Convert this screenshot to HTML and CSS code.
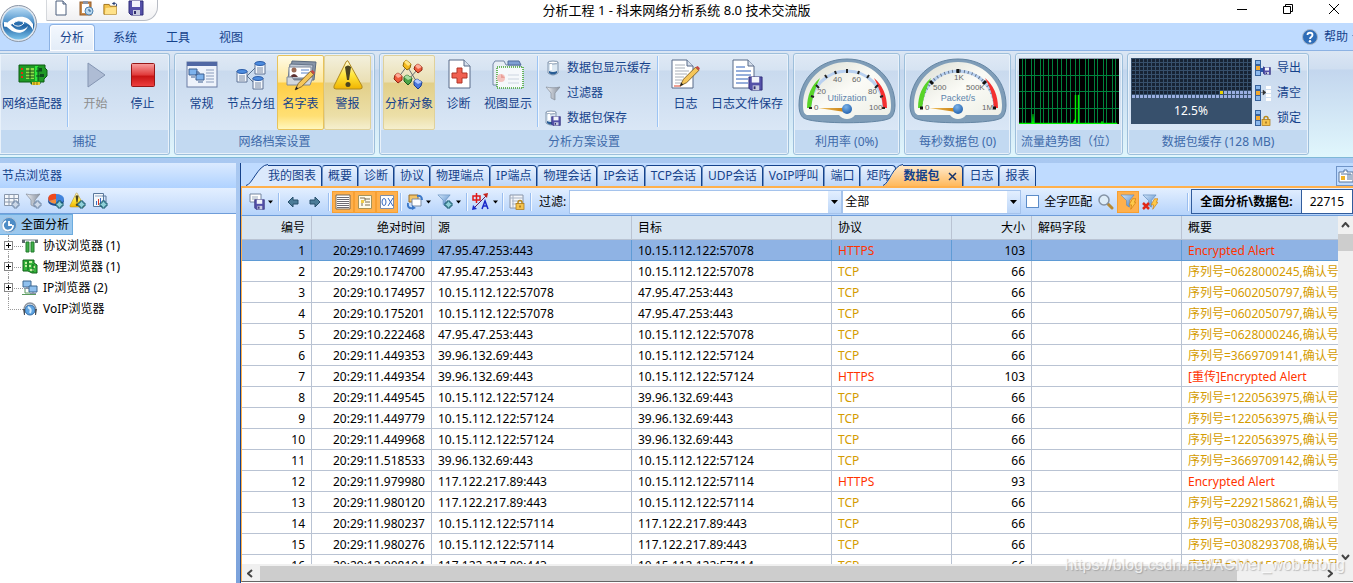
FILE: index.html
```html
<!DOCTYPE html>
<html lang="zh-CN">
<head>
<meta charset="UTF-8">
<meta name="viewport" content="width=device-width, initial-scale=1.0">
<title>分析工程 1 - 科来网络分析系统 8.0 技术交流版</title>
<link rel="stylesheet" href="styles.css">
</head>
<body>
<!-- shared icons -->
<svg class="defs" width="0" height="0" aria-hidden="true">
    <defs>
        <linearGradient id="orb" x1="0" y1="0" x2="0" y2="1"><stop offset="0" stop-color="#b9dcf5"/><stop offset=".45" stop-color="#4f93cb"/><stop offset=".55" stop-color="#1f62a4"/><stop offset="1" stop-color="#7cc3ea"/></linearGradient>
        <linearGradient id="red" x1="0" y1="0" x2="0" y2="1"><stop offset="0" stop-color="#f8a0a0"/><stop offset=".5" stop-color="#e03a3a"/><stop offset=".55" stop-color="#c81414"/><stop offset="1" stop-color="#ee4040"/></linearGradient>
        <linearGradient id="gold" x1="0" y1="0" x2="0" y2="1"><stop offset="0" stop-color="#fffbe0"/><stop offset=".5" stop-color="#ffe63c"/><stop offset="1" stop-color="#f0b400"/></linearGradient>
        <linearGradient id="gray" x1="0" y1="0" x2="1" y2="0"><stop offset="0" stop-color="#f4f6f8"/><stop offset=".5" stop-color="#b8bec8"/><stop offset="1" stop-color="#8a929e"/></linearGradient>
        <linearGradient id="blueFill" x1="0" y1="0" x2="1" y2="1"><stop offset="0" stop-color="#d2e6fa"/><stop offset="1" stop-color="#4a82c4"/></linearGradient>
        <linearGradient id="face" x1="0" y1="0" x2="1" y2="1"><stop offset="0" stop-color="#d9dcd2"/><stop offset=".5" stop-color="#fbfbf6"/><stop offset="1" stop-color="#eceee6"/></linearGradient>
        <radialGradient id="hub" cx=".4" cy=".3" r=".8"><stop offset="0" stop-color="#7db4ea"/><stop offset="1" stop-color="#1a5aa8"/></radialGradient>
        <linearGradient id="needle" x1="0" y1="0" x2="1" y2="0"><stop offset="0" stop-color="#f0c060"/><stop offset="1" stop-color="#c87f10"/></linearGradient>
        <pattern id="cellDark" width="4" height="4" patternUnits="userSpaceOnUse"><rect width="4" height="4" fill="#37506c"/><rect x="1" y="1" width="3" height="3" fill="#172334"/></pattern>
        <pattern id="cellLight" width="4" height="4" patternUnits="userSpaceOnUse"><rect width="4" height="4" fill="#37506c"/><rect x="1" y="1" width="3" height="3" fill="#9aaee0"/></pattern>
        <symbol id="floppy" viewBox="0 0 16 16"><path d="M1 1h14v14H3l-2-2z" fill="#5450a8" stroke="#2f2c78"/><path d="M4 1h8v6H4z" fill="#f2f4fb"/><path d="M5 10h7v5H5z" fill="#c9cce0"/><path d="M6 11h2v3H6z" fill="#333070"/></symbol>
        <symbol id="plus" viewBox="0 0 9 9"><path d="M3 1h3v2h2v3H6v2H3V6H1V3h2z" fill="#8fd0d8" stroke="#14566a"/></symbol>
        <symbol id="plusGray" viewBox="0 0 9 9"><path d="M3 1h3v2h2v3H6v2H3V6H1V3h2z" fill="#ccd8e8" stroke="#7088a8"/></symbol>
        <symbol id="funnel" viewBox="0 0 16 16"><path d="M1 1h14l-5 6v7l-3-2V7z" fill="url(#blueFill)" stroke="#5f8ab8" stroke-width=".7"/></symbol>
        <symbol id="funnelGray" viewBox="0 0 16 16"><path d="M1 2c4 1 10 1 14 0l-5 6v7l-4-2V8z" fill="url(#gray)" stroke="#858d98" stroke-width=".7"/></symbol>
        <symbol id="warn" viewBox="0 0 32 32"><path d="M16 2 30 27q1 3-2 3H4q-3 0-2-3L14 3q1-2 2-1z" fill="url(#gold)" stroke="#b08a20"/><path d="M13 8q3-3 6 0l-2 13h-2z" fill="#4a4420"/><circle cx="16" cy="25.500" r="2.500" fill="#4a4420"/></symbol>
        <symbol id="bolt" viewBox="0 0 8 12"><path d="M4 0h4L6 4h2L2 12l1-5H0z" fill="#ffc94a" stroke="#c47808" stroke-width=".7"/></symbol>
        <symbol id="drive" viewBox="0 0 6 16"><rect width="6" height="16" fill="#37629c"/><path d="M1 1h4v3H1zM1 11h4v4H1z" fill="#8bb8ec"/><path d="M1 6h4v4H1z" fill="#f3a92e"/></symbol>
        <symbol id="lock" viewBox="0 0 10 10"><path d="M3 5V3a2 2 0 0 1 4 0v2" fill="none" stroke="#b88a20" stroke-width="1.500"/><rect x="1" y="4" width="8" height="6" fill="#f4c34e" stroke="#a87410" stroke-width=".7"/><path d="M5 6v2" stroke="#704000"/></symbol>
        <symbol id="jar" viewBox="0 0 16 16"><path d="M3 2v11q5 4 10 0V2z" fill="#dce8f2" stroke="#8296ae"/><ellipse cx="8" cy="2.500" rx="5" ry="1.500" fill="#fff" stroke="#8296ae"/><path d="M4 11q4 2 8 0v2q-4 3-8 0z" fill="#285c94"/><path d="M6 4v6" stroke="#fff" stroke-width="2"/></symbol>
        <symbol id="caret" viewBox="0 0 7 4"><path d="M0 0h7L3.500 4z" fill="#000"/></symbol>
        <symbol id="server" viewBox="0 0 12 14"><path d="M1 2h10v11H1z" fill="#f3f7fc" stroke="#5e7394"/><ellipse cx="6" cy="2.500" rx="5" ry="2" fill="#4d8de0" stroke="#2b5ca8"/><path d="M3 7h6M3 9h6M3 11h6" stroke="#7b8aa4"/></symbol>
        <symbol id="pencil" viewBox="0 0 20 20"><path d="m1 19 3-6L15 2l3 3L7 16z" fill="#f5c65a" stroke="#7a5a20" stroke-width=".8"/><path d="m15 2 2-1 2 2-1 2z" fill="#c64a44"/><path d="m1 19 1-3 2 2z" fill="#222"/></symbol>
        <symbol id="pc" viewBox="0 0 10 10"><path d="M1 1h8v6H1z" fill="#8fc0ee" stroke="#3d6690"/><path d="M4 7h2v1h2v1H2V8h2z" fill="#8794a8"/></symbol>
    </defs>
</svg>

<div class="window">
    <header class="titlebar">
        <div class="quick">
            <button type="button" aria-label="新建"><svg width="16" height="16" viewBox="0 0 16 16"><path d="M3 1h7l3 3v11H3z" fill="#fff" stroke="#4c5f7c"/><path d="M10 1v3h3" fill="#c8d4e4" stroke="#4c5f7c"/></svg></button>
            <button type="button" aria-label="粘贴"><svg width="16" height="16" viewBox="0 0 16 16"><rect x="2" y="2" width="11" height="13" fill="#c98a4a" stroke="#935a24"/><path d="M4 4h7v9H4z" fill="#fff"/><path d="M5 1h5v3H5z" fill="#8c95a5"/><circle cx="11" cy="11" r="4" fill="#b9d8f0" stroke="#4e82b0"/><path d="M11 9v2h2" fill="none" stroke="#255a8c"/></svg></button>
            <button type="button" aria-label="打开"><svg width="16" height="16" viewBox="0 0 18 16"><path d="M1 4h6l1 2h7v9H1z" fill="#f3c34c" stroke="#9c6c12"/><path d="m3 8 12-1v8H2z" fill="#ffe28a"/><path d="M15 6c1-2 0-4-3-3" stroke="#243c70" fill="none"/><path d="m13 1-3 2 3 2z" fill="#243c70"/></svg></button>
            <button type="button" aria-label="保存"><svg width="16" height="16"><use href="#floppy"/></svg></button>
        </div>
        <h1>分析工程 1 - 科来网络分析系统 8.0 技术交流版</h1>
        <div class="winbtns">
            <button type="button" aria-label="最小化"><svg width="12" height="12"><path d="M1 6.500h10" stroke="#000"/></svg></button>
            <button type="button" aria-label="还原"><svg width="12" height="12"><path d="M1.500 3.500h7v7h-7zM3.500 3V1.500h7v7H9" fill="none" stroke="#000"/></svg></button>
            <button type="button" aria-label="关闭"><svg width="12" height="12"><path d="m1 1 10 10M11 1 1 11" stroke="#000"/></svg></button>
        </div>
    </header>
    <button type="button" class="orb" aria-label="主菜单"><svg width="38" height="38" viewBox="0 0 38 38"><circle cx="18.500" cy="18.500" r="18" fill="#dfe7f0" stroke="#8b96a6"/><circle cx="18.500" cy="18.500" r="16" fill="url(#orb)"/><path d="M4 22c2-4 6-7 10-9 8-3 15-1 19 6l0 6c-3-6-8-9-13-8-6 0-10 4-16 5z" fill="#fff"/><path d="M4 17c4 0 6 2 9 5 4 4 11 4 15-1-2 6-8 8-13 6-5-1-7-6-11-6z" fill="#fff"/><path d="M13 19c3-4 8-4 11-1-3 4-8 4-11 1z" fill="#2b6fae" stroke="#fff"/></svg></button>

    <nav class="menubar">
        <button type="button" class="menu active">分析</button>
        <button type="button" class="menu">系统</button>
        <button type="button" class="menu">工具</button>
        <button type="button" class="menu">视图</button>
        <button type="button" class="help"><svg width="16" height="16" viewBox="0 0 16 16"><circle cx="8" cy="8" r="7.500" fill="#2f6db8" stroke="#a8b6c8"/><path d="M5.500 6C5.500 3 10.500 3 10.500 6 10.500 8 8 8 8 10" fill="none" stroke="#fff" stroke-width="1.800"/><circle cx="8" cy="12.300" r="1.200" fill="#fff"/></svg>帮助<svg width="7" height="4"><path d="M0 0h7L3.500 4z" fill="#4a6fa8"/></svg></button>
    </nav>

    <div class="ribbon">
        <section class="group group-first">
            <div class="tools">
                <button type="button" class="big"><svg width="32" height="32" viewBox="0 0 32 32"><path d="M3 6h26v3l2 2v6l-3 3v3h-4v2h-9v-2H3z" fill="#1f9a24" stroke="#0c5a12"/><path d="M10 9h8v11h-8z" fill="#8de04a"/><path d="M10 12h8M10 15h8M10 18h8M14 9v11" stroke="#124a14"/><path d="M5 9h2v2H5zM5 13h2v2H5zM5 17h2v2H5z" fill="#e82c14"/><path d="M19 7h3v15h-3z" fill="#2ee83a"/><path d="M23 9h3v3h-3zM24 15h4v3h-4z" fill="#0d4d1c"/><path d="M20 12h6M20 17h5M22 8v14" stroke="#0d4d1c"/><path d="M16 23h8v3h-8z" fill="#e8c830"/><path d="M18 23v3M21 23v3" stroke="#8c6c00"/></svg><span>网络适配器</span></button>
                <i class="sep"></i>
                <button type="button" class="big" disabled><svg width="32" height="32" viewBox="0 0 32 32"><path d="M8 4v24l17-12z" fill="#aebcd4" stroke="#8495b2"/></svg><span>开始</span></button>
                <button type="button" class="big"><svg width="32" height="32" viewBox="0 0 32 32"><rect x="4.500" y="4.500" width="23" height="23" rx="1" fill="url(#red)" stroke="#961616"/></svg><span>停止</span></button>
            </div>
            <h2>捕捉</h2>
        </section>

        <section class="group">
            <div class="tools">
                <button type="button" class="big"><svg width="32" height="32" viewBox="0 0 32 32"><rect x="1" y="3" width="30" height="25" fill="#eef3fb" stroke="#6a7da4"/><path d="M1 3h30v4H1z" fill="#5068a4"/><path d="M3 10h8v6H3zM10 15h8v6h-8z" fill="#7db2ec" stroke="#3d5f90"/><path d="M5 18h4M12 23h5M10 13h3v2" fill="none" stroke="#3d5f90"/><path d="M20 11h8M20 14h8M20 17h8M20 20h8M20 23h8" stroke="#8a9cbc"/></svg><span>常规</span></button>
                <button type="button" class="big"><svg width="32" height="32" viewBox="0 0 32 32"><path d="M12 17 20 9M12 17l8 8" stroke="#56708e"/><use href="#server" x="1" y="10" width="12" height="14"/><use href="#server" x="19" y="2" width="12" height="14"/><use href="#server" x="17" y="17" width="12" height="14"/></svg><span>节点分组</span></button>
                <button type="button" class="big pressed"><svg width="32" height="32" viewBox="0 0 32 32"><path d="m7 2 24 1-2 18H4z" fill="#8795a8" stroke="#59697e"/><path d="m5 5 23 1-1 14H3z" fill="#c3ccd8" stroke="#657489"/><path d="M4 8h22v11H4z" fill="#fff" stroke="#7a8698"/><circle cx="9" cy="11" r="2.500" fill="#9b6a54"/><path d="M5 18q4-6 8 0z" fill="#5c3030"/><path d="M16 11h8M16 14h8" stroke="#5b84c8"/><path d="M2 18h5l2 3h12l2-3h5l-3 8H2z" fill="#d3d8de" stroke="#828b98"/><use href="#pencil" x="9" y="10" width="22" height="22"/></svg><span>名字表</span></button>
                <button type="button" class="big hot"><svg width="32" height="32"><use href="#warn"/></svg><span>警报</span></button>
            </div>
            <h2>网络档案设置</h2>
        </section>

        <section class="group">
            <div class="tools">
                <button type="button" class="big hot"><svg width="32" height="32" viewBox="0 0 32 32"><path d="M14 7 5 19M14 7l11 18M25 10 16 20" stroke="#666b70"/><path d="m13 1 5 4-1 4-3 2-4-4 1-4z" fill="#f3b81c" stroke="#8c6400"/><path d="m13 1 5 4-3 2-4-4z" fill="#ffe480"/><path d="m25 5 4 3v3l-4 3-4-4 1-3z" fill="#ee5a3c" stroke="#8e2410"/><path d="m25 5 4 3-4 2-3-3z" fill="#ffad98"/><path d="m5 14 4 3v4l-4 3-4-4 1-4z" fill="#ee5a3c" stroke="#8e2410"/><path d="m5 14 4 3-4 2-3-3z" fill="#ffad98"/><path d="m14 16 5 3-1 4-3 3-4-4v-4z" fill="#4da346" stroke="#1c5c1c"/><path d="m14 16 5 3-4 2-4-3z" fill="#a8dda0"/><path d="m24 20 5 3-1 4-3 3-4-4v-4z" fill="#4a78dc" stroke="#1a3c8c"/><path d="m24 20 5 3-4 2-4-3z" fill="#afc8ff"/></svg><span>分析对象</span></button>
                <button type="button" class="big"><svg width="32" height="32" viewBox="0 0 32 32"><path d="M6 1h15l6 6v22H6z" fill="#fff" stroke="#596b88"/><path d="M21 1v6h6" fill="#d5deea" stroke="#596b88"/><path d="M14 9h5v5h5v5h-5v5h-5v-5H9v-5h5z" fill="#f06050" stroke="#b03426"/></svg><span>诊断</span></button>
                <button type="button" class="big"><svg width="32" height="32" viewBox="0 0 32 32"><path d="M1 5l2-3h9l2 4h14v20H1z" fill="#e8eef5" stroke="#7487a6"/><path d="M16 2h11l2 4H16z" fill="#80a0d4" stroke="#516c9c"/><path d="M5 8h26v21H5z" fill="#f5f8fb" stroke="#42a42c" stroke-dasharray="1 1" stroke-width="1.500"/><circle cx="9" cy="19" r="4" fill="#f4c3bf"/><path d="M9 15v4h4" fill="#e99f98"/><path d="M16 16h11M16 20h11M16 24h11" stroke="#ccd5e0"/></svg><span>视图显示</span></button>
                <i class="sep"></i>
                <div class="smalls">
                    <button type="button"><svg width="16" height="16"><use href="#jar"/></svg>数据包显示缓存</button>
                    <button type="button"><svg width="16" height="16"><use href="#funnelGray"/></svg>过滤器</button>
                    <button type="button"><svg width="16" height="16"><use href="#jar" x="-2" width="16" height="16"/><use href="#floppy" x="6" y="6" width="10" height="10"/></svg>数据包保存</button>
                </div>
                <i class="sep"></i>
                <button type="button" class="big"><svg width="32" height="32" viewBox="0 0 32 32"><path d="M2 1h15l6 6v22H2z" fill="#fff" stroke="#596b88"/><path d="M17 1v6h6" fill="#d5deea" stroke="#596b88"/><path d="M5 6h10M5 9h10M5 12h14M5 15h12M5 18h9M5 21h7M5 24h6" stroke="#a8afb8"/><path d="M4 27h7" stroke="#e04028"/><use href="#pencil" x="9" y="6" width="22" height="22"/></svg><span>日志</span></button>
                <button type="button" class="big"><svg width="32" height="32" viewBox="0 0 32 32"><path d="M2 1h15l6 6v22H2z" fill="#fff" stroke="#596b88"/><path d="M17 1v6h6" fill="#d5deea" stroke="#596b88"/><path d="M5 8h9M5 12h15M5 16h15M5 20h12M5 24h12" stroke="#2c5eb8"/><use href="#floppy" x="17" y="17" width="15" height="15"/></svg><span>日志文件保存</span></button>
            </div>
            <h2>分析方案设置</h2>
        </section>

        <section class="group">
            <div class="tools meter">
                <svg width="98" height="66" viewBox="0 0 98 66">
                    <path d="M1 47C1 20 22 1 49 1s48 19 48 46c0 7-2 13-7 14-13 5-69 5-82 0-5-1-7-7-7-14z" fill="#7f9db8" stroke="#6485a3"/>
                    <path d="M5 47C5 22 25 4 49 4s44 18 44 43c0 6-1 9-4 10H57a10 10 0 0 1-16 0H9c-3-1-4-4-4-10z" fill="url(#face)"/>
                    <path d="M12 50a37 37 0 0 1 74 0" fill="none" stroke="#b8d0f0" stroke-width="3"/>
                    <path d="M9 50Q9 31 22 20 15 34 13 50z" fill="#58d428"/>
                    <path d="M89 50q0-19-13-30 8 14 9 30z" fill="#f43030"/>
                    <path d="M11 50h3M13 38l3 1M18 27l3 3M27 17l2 3M37 13l1 3M49 11v4M61 13l-1 3M71 17l-2 3M80 27l-3 3M85 38l-3 1M87 50h-3" stroke="#222" stroke-width="2"/>
                    <g class="scale"><text x="16" y="52">0</text><text x="19" y="36">20</text><text x="35" y="24">40</text><text x="54" y="24">60</text><text x="70" y="36">80</text><text x="71" y="52">100</text></g>
                    <text class="caption" x="49" y="43">Utilization</text>
                    <path d="M20 50h27v4z" fill="url(#needle)"/><circle cx="49" cy="51" r="5" fill="url(#hub)"/>
                </svg>
            </div>
            <h2>利用率 (0%)</h2>
        </section>

        <section class="group">
            <div class="tools meter">
                <svg width="98" height="66" viewBox="0 0 98 66">
                    <path d="M1 47C1 20 22 1 49 1s48 19 48 46c0 7-2 13-7 14-13 5-69 5-82 0-5-1-7-7-7-14z" fill="#7f9db8" stroke="#6485a3"/>
                    <path d="M5 47C5 22 25 4 49 4s44 18 44 43c0 6-1 9-4 10H57a10 10 0 0 1-16 0H9c-3-1-4-4-4-10z" fill="url(#face)"/>
                    <path d="M12 50a37 37 0 0 1 74 0" fill="none" stroke="#b8d0f0" stroke-width="3"/>
                    <path d="M12 50a37 37 0 0 1 74 0" fill="none" stroke="#68788c" stroke-width="3" stroke-dasharray="1 3"/>
                    <path d="M9 50Q9 31 22 20 15 34 13 50z" fill="#58d428"/>
                    <path d="M89 50q0-19-13-30 8 14 9 30z" fill="#f43030"/>
                    <path d="M11 50h3M21 23l3 3M49 11v4M77 23l-3 3M87 50h-3" stroke="#111" stroke-width="3"/>
                    <g class="scale"><text x="16" y="52">0</text><text x="24" y="32">500</text><text x="45" y="22">1K</text><text x="57" y="32">500K</text><text x="73" y="52">1M</text></g>
                    <text class="caption" x="49" y="43">Packet/s</text>
                    <path d="M20 50h27v4z" fill="url(#needle)"/><circle cx="49" cy="51" r="5" fill="url(#hub)"/>
                </svg>
            </div>
            <h2>每秒数据包 (0)</h2>
        </section>

        <section class="group">
            <div class="tools meter">
                <svg width="100" height="66" viewBox="0 0 100 66">
                    <rect width="100" height="66" fill="#000"/>
                    <path d="M3.500 0v66M6.500 0v66M12.500 0v66M15.500 0v66M21.500 0v66M24.500 0v66M29.500 0v66M33.500 0v66M38.500 0v66M42.500 0v66M47.500 0v66M51.500 0v66M56.500 0v66M60.500 0v66M66.500 0v66M69.500 0v66M75.500 0v66M78.500 0v66M84.500 0v66M87.500 0v66M93.500 0v66M96.500 0v66M0 17.500h100M0 33.500h100M0 50.500h100" stroke="#00823c"/>
                    <path d="M0 66V65h13l1-9 1 9h39l2-4V37h1v28h2V37h1v28h22l1-2 1 2h14v1z" fill="#0f0" stroke="#0d0" stroke-width=".5"/>
                    <path d="M0 .5h100" stroke="#8a9cae"/>
                </svg>
            </div>
            <h2>流量趋势图（位）</h2>
        </section>

        <section class="group">
            <div class="tools buffer">
                <svg width="121" height="66" viewBox="0 0 121 66">
                    <rect width="121" height="66" fill="#37506c"/>
                    <rect width="121" height="36" fill="url(#cellDark)"/>
                    <rect x="92" y="32" width="29" height="4" fill="url(#cellLight)"/>
                    <rect y="36" width="121" height="4" fill="url(#cellLight)"/>
                    <rect x="89" y="33" width="3" height="3" fill="#e6d200"/>
                    <text class="percent" x="60" y="57">12.5%</text>
                </svg>
                <div class="smalls">
                    <button type="button"><svg width="16" height="16"><use href="#drive" width="6" height="16"/><path d="M5 8h3V6l4 4-4 4v-2H5z" fill="#2d55a8"/><use href="#floppy" x="8" y="7" width="8" height="8"/></svg>导出</button>
                    <button type="button"><svg width="16" height="16"><use href="#drive" width="6" height="16"/><path d="M6 7.500h4M8 5l3 2.500L8 10z" fill="#333" stroke="#333" stroke-width=".5"/><path d="M11 1h5v3h-5zM11 5h5v3h-5zM11 9h5v3h-5zM11 13h5v3h-5z" fill="#fff"/></svg>清空</button>
                    <button type="button"><svg width="16" height="16"><use href="#drive" width="6" height="16"/><use href="#lock" x="6" y="5" width="10" height="11"/></svg>锁定</button>
                </div>
            </div>
            <h2>数据包缓存 (128 MB)</h2>
        </section>
    </div>

    <div class="workspace">
        <aside class="explorer">
            <h2>节点浏览器</h2>
            <div class="explorer-tools">
                <button type="button" aria-label="添加表"><svg width="18" height="18"><path d="M1.500 2.500h14v11h-14zM1.500 6.500h14M1.500 10h14M6 3v10M11 3v10" fill="#f4f7fb" stroke="#8a98ac"/><use href="#plusGray" x="8" y="8" width="9" height="9"/></svg></button>
                <button type="button" aria-label="添加过滤器"><svg width="18" height="18"><use href="#funnelGray" width="16" height="16"/><use href="#plusGray" x="8" y="8" width="9" height="9"/></svg></button>
                <button type="button" aria-label="添加图表"><svg width="18" height="18"><ellipse cx="9" cy="9" rx="8" ry="5" fill="#1c4c94"/><ellipse cx="9" cy="7" rx="8" ry="5" fill="#4284dc"/><path d="M9 7V2C2 1 0 6 2 9l7-2" fill="#f04a1c"/><path d="M2 9q3 3 7 3V7z" fill="#f48c3c"/><use href="#plus" x="8" y="8" width="9" height="9"/></svg></button>
                <button type="button" aria-label="添加警报"><svg width="18" height="18"><use href="#warn" width="16" height="16"/><use href="#plus" x="8" y="8" width="9" height="9"/></svg></button>
                <button type="button" aria-label="添加报表"><svg width="18" height="18"><path d="M2.500 1.500h10v13h-10z" fill="#f4f8fc" stroke="#5a789c"/><path d="M4 4h7" stroke="#8ca4c0"/><path d="M5 9h1v4H5zM9 6h1v7H9z" fill="#3a6cc4"/><path d="M7 7h1v6H7z" fill="#d43c28"/><path d="M11 4h4v6" fill="none" stroke="#5a789c"/><use href="#plus" x="8" y="8" width="9" height="9"/></svg></button>
            </div>
            <ul class="tree">
                <li class="root"><svg width="16" height="16"><circle cx="8" cy="8" r="7.500" fill="#4d8cc6" stroke="#aec2d6"/><path d="M5 4a5 5 0 1 0 7 4M8 4v4h3" fill="none" stroke="#fff" stroke-width="1.800"/></svg><span>全面分析</span></li>
                <li><button type="button" class="expand" aria-label="展开"></button><svg width="16" height="16"><path d="M0 1h16v2H0z" fill="#b8bfc4"/><path d="M0 2h3v3H0zM13 2h3v3h-3z" fill="#5f6a70"/><path d="M4 4h3v10H4zM9 4h3v10H9z" fill="#3fae48" stroke="#237a2c"/></svg><span>协议浏览器 (1)</span></li>
                <li><button type="button" class="expand" aria-label="展开"></button><svg width="16" height="16"><path d="M1 1h11v3l3 2v8h-5l-4-2H1z" fill="#35b43c" stroke="#0f5f17"/><path d="M3 4h2M7 3h3M3 7h2M7 7h2M11 8h2M8 11h4" stroke="#c4f0a0" stroke-width="2"/><path d="M6 2v9M11 5v8" stroke="#0f5f17"/></svg><span>物理浏览器 (1)</span></li>
                <li><button type="button" class="expand" aria-label="展开"></button><svg width="16" height="16"><use href="#pc" width="10" height="10"/><use href="#pc" x="6" y="5" width="10" height="10"/><path d="M3 9v4h5M0 14.500h14" fill="none" stroke="#5a9a5e"/></svg><span>IP浏览器 (2)</span></li>
                <li class="last"><svg width="16" height="16"><circle cx="8" cy="9" r="5" fill="#5fa4e2" stroke="#2f6aa6"/><path d="M6 6q4 2 2 6" stroke="#d0ecff" stroke-width="2" fill="none"/><path d="M2 9a6 7 0 0 1 12 0" fill="none" stroke="#8c949e" stroke-width="1.500"/><path d="M1 8h2v6H2zM13 8h2l-1 6h-1z" fill="#4a5058"/></svg><span>VoIP浏览器</span></li>
            </ul>
        </aside>

        <main class="view">
            <div class="tabs">
                <svg class="slant" width="22" height="22"><path d="M0 22C10 16 12 1 22 1v21z" fill="#dbe9fc"/><path d="M0 21.500C6 21 12 1 22 .5" fill="none" stroke="#15428b"/></svg>
                <button type="button" class="tab slanted">我的图表</button>
                <button type="button" class="tab">概要</button>
                <button type="button" class="tab">诊断</button>
                <button type="button" class="tab">协议</button>
                <button type="button" class="tab">物理端点</button>
                <button type="button" class="tab">IP端点</button>
                <button type="button" class="tab">物理会话</button>
                <button type="button" class="tab">IP会话</button>
                <button type="button" class="tab">TCP会话</button>
                <button type="button" class="tab">UDP会话</button>
                <button type="button" class="tab">VoIP呼叫</button>
                <button type="button" class="tab">端口</button>
                <button type="button" class="tab">矩阵</button>
                <svg class="slant overlap" width="20" height="22"><defs><linearGradient id="tabOn" x1="0" y1="0" x2="0" y2="1"><stop offset="0" stop-color="#ffe9cb"/><stop offset="1" stop-color="#ffb95c"/></linearGradient></defs><path d="M0 22C8 20 10 1 20 1v21z" fill="url(#tabOn)"/><path d="M0 21.500C6 20 10 1 20 .5" fill="none" stroke="#15428b"/></svg>
                <button type="button" class="tab on">数据包<svg width="9" height="9"><path d="m1 1 7 7M8 1 1 8" stroke="#15326b" stroke-width="1.500"/></svg></button>
                <button type="button" class="tab">日志</button>
                <button type="button" class="tab">报表</button>
                <button type="button" class="tab-more" aria-label="视图"><svg width="16" height="16"><path d="M1 4h5V2h3v2h6v10H1z" fill="#fff" stroke="#56749c"/><path d="M9 7h5M9 9h5M9 11h5M3 6h10" stroke="#56749c"/><rect x="3" y="8" width="4" height="4" fill="#f0b428"/></svg></button>
            </div>

            <div class="toolbar">
                <button type="button" class="tool wide" aria-label="保存数据包"><svg width="16" height="17"><path d="M1 1h11v8H1z" fill="#fff" stroke="#7486a0"/><path d="M3 4h6M3 6h6" stroke="#9aaabd"/><use href="#floppy" x="5" y="6" width="11" height="11"/></svg><svg width="5" height="4"><use href="#caret"/></svg></button>
                <i class="bar"></i>
                <button type="button" class="tool" aria-label="上一个"><svg width="12" height="12"><path d="m1 6 5-5v3h5v4H6v3z" fill="#4c7c98" stroke="#28506c"/></svg></button>
                <button type="button" class="tool" aria-label="下一个"><svg width="12" height="12"><path d="M11 6 6 1v3H1v4h5v3z" fill="#4c7c98" stroke="#28506c"/></svg></button>
                <i class="bar"></i>
                <div class="toggles">
                    <button type="button" class="tool toggled" aria-label="列表"><svg width="16" height="16"><path d="M1 1h14v14H1z" fill="#fff" stroke="#7c6c58"/><path d="M2 3.500h12M2 5.500h12M2 7.500h12M2 9.500h12M2 11.500h12M2 13.500h12" stroke="#6c6c74"/></svg></button>
                    <button type="button" class="tool toggled" aria-label="解码"><svg width="16" height="16"><path d="M1.500 1.500h13v13h-13z" fill="#fffbea" stroke="#a89458"/><path d="M3 4h5v3M5 7v5M8 5h5M8 8h5M8 11h5" fill="none" stroke="#786c50"/><path d="M4 6h3v3H4z" fill="#f0cc48"/></svg></button>
                    <button type="button" class="tool toggled" aria-label="十六进制"><svg width="16" height="16"><path d="M1.500 1.500h13v13h-13z" fill="#fff" stroke="#7e8ea8"/><ellipse cx="5" cy="8" rx="2" ry="3.500" fill="none" stroke="#3468c0"/><path d="m9 4 5 8M14 4 9 12" stroke="#3468c0"/></svg></button>
                </div>
                <i class="bar"></i>
                <button type="button" class="tool wide" aria-label="布局"><svg width="16" height="16"><path d="M2 1h9v7H2z" fill="#f2c468" stroke="#996c28"/><path d="M5 5h9v7H5z" fill="#fff" stroke="#788ba4"/><path d="M10 2q5-1 5 4M6 14q-6 1-5-5" fill="none" stroke="#3c78c8" stroke-width="2"/><path d="m5 11 4 3-4 2z" fill="#3c78c8"/></svg><svg width="5" height="4"><use href="#caret"/></svg></button>
                <button type="button" class="tool wide" aria-label="添加过滤"><svg width="16" height="17"><use href="#funnel" width="14" height="16"/><use href="#plus" x="7" y="7" width="9" height="9"/></svg><svg width="5" height="4"><use href="#caret"/></svg></button>
                <i class="bar"></i>
                <button type="button" class="tool wide" aria-label="中英文编码"><svg width="18" height="17"><path d="M1 3h7v4H1zM4.500 0v10" fill="none" stroke="#e01818" stroke-width="1.500"/><path d="m10 16 3-8 3 8M11 13h4" fill="none" stroke="#1828c8" stroke-width="1.500"/><path d="M2 15 14 3" stroke="#5c2060"/><path d="m16 0-5 1 4 4z" fill="#c4241c"/><path d="m0 17 1-5 4 4z" fill="#1828c8"/></svg><svg width="5" height="4"><use href="#caret"/></svg></button>
                <i class="bar"></i>
                <button type="button" class="tool" aria-label="锁定"><svg width="16" height="16"><path d="M1 1h13v13H1z" fill="#f4f6fa" stroke="#8894a8"/><path d="M1 4h13M3 7h9M3 10h9M4 1v13" stroke="#a8b3c4"/><use href="#lock" x="6" y="5" width="10" height="11"/></svg></button>
                <i class="bar"></i>
                <label class="filter-label" for="filter">过滤:</label>
                <div class="combo combo-filter"><input type="text" id="filter"><button type="button" aria-label="过滤历史"><svg width="7" height="4"><use href="#caret"/></svg></button></div>
                <div class="combo combo-scope"><select id="scope" aria-label="范围"><option>全部</option></select><span class="arrow"><svg width="7" height="4"><use href="#caret"/></svg></span></div>
                <input type="checkbox" id="whole"><label class="whole" for="whole">全字匹配</label>
                <button type="button" class="tool" aria-label="查找"><svg width="16" height="16"><path d="m9 9 5 5" stroke="#b88a34" stroke-width="3" stroke-linecap="round"/><circle cx="6" cy="6" r="5" fill="#ddecf8" stroke="#8492a4" stroke-width="1.500"/></svg></button>
                <button type="button" class="tool toggled" aria-label="应用过滤"><svg width="16" height="16"><use href="#funnel" width="15" height="15"/><use href="#bolt" x="9" y="4" width="7" height="12"/></svg></button>
                <button type="button" class="tool" aria-label="清除过滤"><svg width="16" height="16"><use href="#funnel" width="15" height="15"/><path d="m1 9 6 6M7 9l-6 6" stroke="#e02818" stroke-width="2.500"/><use href="#bolt" x="9" y="4" width="7" height="12"/></svg></button>
                <i class="bar bar-end"></i>
                <div class="status"><strong>全面分析\数据包:</strong><output>22715</output></div>
            </div>

            <div class="sheet">
                <div class="rows">
                    <table>
                        <colgroup><col class="c-no"><col class="c-time"><col class="c-addr"><col class="c-addr"><col class="c-proto"><col class="c-size"><col class="c-field"><col></colgroup>
                        <thead>
                            <tr><th class="r">编号</th><th class="r">绝对时间</th><th>源</th><th>目标</th><th>协议</th><th class="r">大小</th><th>解码字段</th><th>概要</th></tr>
                        </thead>
                        <tbody>
                            <tr class="selected https"><td>1</td><td>20:29:10.174699</td><td>47.95.47.253:443</td><td>10.15.112.122:57078</td><td>HTTPS</td><td>103</td><td></td><td>Encrypted Alert</td></tr>
                            <tr><td>2</td><td>20:29:10.174700</td><td>47.95.47.253:443</td><td>10.15.112.122:57078</td><td>TCP</td><td>66</td><td></td><td>序列号=0628000245,确认号</td></tr>
                            <tr><td>3</td><td>20:29:10.174957</td><td>10.15.112.122:57078</td><td>47.95.47.253:443</td><td>TCP</td><td>66</td><td></td><td>序列号=0602050797,确认号</td></tr>
                            <tr><td>4</td><td>20:29:10.175201</td><td>10.15.112.122:57078</td><td>47.95.47.253:443</td><td>TCP</td><td>66</td><td></td><td>序列号=0602050797,确认号</td></tr>
                            <tr><td>5</td><td>20:29:10.222468</td><td>47.95.47.253:443</td><td>10.15.112.122:57078</td><td>TCP</td><td>66</td><td></td><td>序列号=0628000246,确认号</td></tr>
                            <tr><td>6</td><td>20:29:11.449353</td><td>39.96.132.69:443</td><td>10.15.112.122:57124</td><td>TCP</td><td>66</td><td></td><td>序列号=3669709141,确认号</td></tr>
                            <tr class="https"><td>7</td><td>20:29:11.449354</td><td>39.96.132.69:443</td><td>10.15.112.122:57124</td><td>HTTPS</td><td>103</td><td></td><td>[重传]Encrypted Alert</td></tr>
                            <tr><td>8</td><td>20:29:11.449545</td><td>10.15.112.122:57124</td><td>39.96.132.69:443</td><td>TCP</td><td>66</td><td></td><td>序列号=1220563975,确认号</td></tr>
                            <tr><td>9</td><td>20:29:11.449779</td><td>10.15.112.122:57124</td><td>39.96.132.69:443</td><td>TCP</td><td>66</td><td></td><td>序列号=1220563975,确认号</td></tr>
                            <tr><td>10</td><td>20:29:11.449968</td><td>10.15.112.122:57124</td><td>39.96.132.69:443</td><td>TCP</td><td>66</td><td></td><td>序列号=1220563975,确认号</td></tr>
                            <tr><td>11</td><td>20:29:11.518533</td><td>39.96.132.69:443</td><td>10.15.112.122:57124</td><td>TCP</td><td>66</td><td></td><td>序列号=3669709142,确认号</td></tr>
                            <tr class="https"><td>12</td><td>20:29:11.979980</td><td>117.122.217.89:443</td><td>10.15.112.122:57114</td><td>HTTPS</td><td>93</td><td></td><td>Encrypted Alert</td></tr>
                            <tr><td>13</td><td>20:29:11.980120</td><td>117.122.217.89:443</td><td>10.15.112.122:57114</td><td>TCP</td><td>66</td><td></td><td>序列号=2292158621,确认号</td></tr>
                            <tr><td>14</td><td>20:29:11.980237</td><td>10.15.112.122:57114</td><td>117.122.217.89:443</td><td>TCP</td><td>66</td><td></td><td>序列号=0308293708,确认号</td></tr>
                            <tr><td>15</td><td>20:29:11.980276</td><td>10.15.112.122:57114</td><td>117.122.217.89:443</td><td>TCP</td><td>66</td><td></td><td>序列号=0308293708,确认号</td></tr>
                            <tr><td>16</td><td>20:29:12.008194</td><td>117.122.217.89:443</td><td>10.15.112.122:57114</td><td>TCP</td><td>66</td><td></td><td>序列号=2292158622,确认号</td></tr>
                        </tbody>
                    </table>
                </div>
                <div class="vscroll">
                    <svg width="9" height="6"><path d="m1 5 3.500-4L8 5" fill="none" stroke="#444" stroke-width="2"/></svg>
                    <i class="thumb"></i>
                    <svg class="end" width="9" height="6"><path d="m1 1 3.500 4L8 1" fill="none" stroke="#444" stroke-width="2"/></svg>
                </div>
                <div class="hscroll">
                    <svg width="6" height="9"><path d="M5 1 1 4.500 5 8" fill="none" stroke="#444" stroke-width="2"/></svg>
                    <i class="thumb"></i>
                    <svg class="end" width="6" height="9"><path d="m1 1 4 3.500L1 8" fill="none" stroke="#444" stroke-width="2"/></svg>
                </div>
            </div>
        </main>
    </div>
    <div class="watermark">https://blog.csdn.net/ACMer_wobudong</div>
</div>
</body>
</html>
```
FILE: styles.css
```css
* {
    box-sizing: border-box;
}
body {
    margin: 0;
    font-family: "Noto Sans", "Noto Sans CJK SC", sans-serif;
    font-size: 12px;
    line-height: 16px;
    color: #000;
}
button, input, select {
    font: inherit;
    color: inherit;
    margin: 0;
    padding: 0;
    border: 0;
    border-radius: 0;
    background: none;
}
svg {
    display: block;
    flex: none;
}
h1, h2 {
    margin: 0;
    font-size: 12px;
    font-weight: normal;
}
.defs {
    position: absolute;
}
.window {
    position: relative;
    display: flex;
    flex-direction: column;
    height: 100vh;
    overflow: hidden;
    background: #fff;
}

/* title bar */
.titlebar {
    display: grid;
    grid-template-columns: 1fr auto 1fr;
    height: 23px;
    flex: none;
}
.quick {
    display: flex;
    gap: 9px;
    width: 112px;
    height: 21px;
    margin-left: 46px;
    padding: 0 6px;
    border: 1px solid #b8bcc4;
    border-top: 0;
    border-left-color: #d5d8dc;
    border-radius: 0 0 14px 0;
    background: linear-gradient(#fff, #f0f0f2);
}
.quick button {
    height: 16px;
}
.titlebar h1 {
    font-size: 13px;
    line-height: 20px;
}
.winbtns {
    display: flex;
    justify-content: flex-end;
    gap: 34px;
    padding: 3px 13px 0 0;
    height: 15px;
}
.orb {
    position: absolute;
    left: 0;
    top: 5px;
    z-index: 2;
}

/* menu tabs */
.menubar {
    display: flex;
    flex: none;
    gap: 7px;
    height: 28px;
    padding: 1px 0 0 49px;
    background: #bfdbff;
    border-bottom: 1px solid #8db2e3;
    color: #15428b;
}
.menu {
    height: 27px;
    padding: 0 10px;
    border: 1px solid transparent;
    border-bottom: 0;
}
.menu.active {
    border-color: #8db2e3;
    border-radius: 4px 4px 0 0;
    background: linear-gradient(#f4f8fe, #e2ecf8);
    box-shadow: inset 0 0 1px 1px #fff;
}
.help {
    display: flex;
    align-items: center;
    gap: 6px;
    margin-left: auto;
    height: 26px;
    white-space: nowrap;
}
.help svg:last-child {
    margin: 0 -6px 0 -2px;
}

/* ribbon */
.ribbon {
    display: flex;
    flex: none;
    gap: 4px;
    height: 107px;
    padding: 2px 0;
    background: linear-gradient(#dbe6f4 0, #cfdef0 18px, #c3d6ee 19px, #e0f6fc 105px);
    border-bottom: 1px solid #7fb8d8;
    color: #15428b;
}
.group {
    display: flex;
    flex-direction: column;
    flex: none;
    border: 1px solid #9ebfdb;
    border-radius: 3px;
    background: linear-gradient(#dfe9f5 0, #d6e3f2 16px, #c9daee 17px, #dae7f6 78px);
    box-shadow: inset 0 0 0 1px #e8f1fa;
}
.group-first {
    border-left: 0;
    border-radius: 0 3px 3px 0;
}
.group h2 {
    margin: 0 1px 1px;
    height: 23px;
    line-height: 23px;
    text-align: center;
    color: #3e6aaa;
    background: #c2d9f1;
}
.tools {
    display: flex;
    flex: 1;
    padding: 1px 3px 0;
}
.group-first .tools {
    padding-left: 0;
}
.big {
    display: flex;
    flex-direction: column;
    align-items: center;
    gap: 5px;
    min-width: 47px;
    height: 75px;
    padding: 3px 1px;
    border: 1px solid transparent;
    white-space: nowrap;
}
.big:disabled {
    color: #8d8d8d;
}
.big.pressed {
    border-color: #e8c35a;
    border-radius: 2px;
    background: linear-gradient(#fffbe6 0, #ffe79a 26px, #ffce45 27px, #ffdf74 60px, #fff7bd);
}
.big.hot {
    border-color: #dfd19b;
    border-radius: 2px;
    background: linear-gradient(#f3f0dc 0, #eadfb4 26px, #e2cf88 27px, #ecdfa8 60px, #f5efce);
}
.sep {
    width: 2px;
    height: 71px;
    margin: 1px 3px 0;
    background: #9cc4f4;
    border-right: 1px solid #f0f6fd;
}
.smalls {
    display: flex;
    flex-direction: column;
    gap: 1px;
    padding: 1px 3px 0;
}
.smalls button {
    display: flex;
    align-items: center;
    gap: 6px;
    height: 24px;
    white-space: nowrap;
}
.meter {
    justify-content: center;
    min-width: 105px;
    padding: 4px 3px 0;
}
.buffer {
    padding: 4px 3px 0;
}
.buffer .smalls {
    margin-top: -4px;
    padding: 2px 4px 0 3px;
}
.scale {
    font: 8px "Liberation Sans", sans-serif;
    fill: #666;
}
.caption {
    font: 9px "Liberation Sans", sans-serif;
    fill: #5d84ac;
    text-anchor: middle;
}
.percent {
    fill: #fff;
    text-anchor: middle;
}

/* workspace */
.workspace {
    display: flex;
    flex: 1;
    min-height: 0;
    gap: 4px;
    padding-top: 5px;
    background: linear-gradient(#a9c8f1, #a3c4ef 40%, #7ba2db);
}
.explorer {
    display: flex;
    flex-direction: column;
    flex: none;
    width: 236px;
    background: #fff;
}
.explorer h2 {
    height: 25px;
    padding: 0 2px;
    line-height: 25px;
    color: #15428b;
    background: linear-gradient(#dbeaff, #afd2ff);
}
.explorer-tools {
    display: flex;
    gap: 4px;
    height: 26px;
    padding: 4px 3px;
    background: linear-gradient(#e3efff, #c0d9fb);
    border-bottom: 1px solid #6f9dd9;
}
.tree {
    margin: 0;
    padding: 0;
    list-style: none;
}
.tree li {
    position: relative;
    display: flex;
    align-items: center;
    gap: 5px;
    height: 21px;
    padding-left: 22px;
}
.tree .root {
    width: 73px;
    padding-left: 1px;
    gap: 4px;
    background: #9bc8ee;
    border: 1px solid #6cacdf;
    border-left: 0;
}
/* dotted connectors between the nodes */
.tree li:not(.root)::before {
    content: "";
    position: absolute;
    left: 8px;
    top: 0;
    width: 14px;
    height: 11px;
    border-left: 1px dotted #999;
    border-bottom: 1px dotted #999;
}
.tree li:not(.root):not(.last)::after {
    content: "";
    position: absolute;
    left: 8px;
    top: 11px;
    height: 10px;
    border-left: 1px dotted #999;
}
.expand {
    position: absolute;
    left: 4px;
    top: 6px;
    z-index: 1;
    width: 9px;
    height: 9px;
    border: 1px solid #888;
    background: linear-gradient(#000, #000) center / 5px 1px no-repeat, linear-gradient(#000, #000) center / 1px 5px no-repeat, #fff;
}

/* right view */
.view {
    display: flex;
    flex-direction: column;
    flex: 1;
    min-width: 0;
    border-left: 1px solid #15428b;
    background: #fff;
}
.tabs {
    display: flex;
    align-items: flex-end;
    flex: none;
    height: 25px;
    padding: 2px 0 0 5px;
    background: #bfdbff;
    border-bottom: 2px solid #ffb04c;
    color: #15428b;
}
.tab {
    height: 21px;
    padding: 0 5px;
    border: 1px solid #15428b;
    border-bottom: 0;
    border-left-color: #6f94c8;
    border-radius: 3px 4px 0 0;
    background: linear-gradient(#e9f2fe, #bdd6f8);
    white-space: nowrap;
}
.tab.slanted {
    border-left: 0;
    padding-left: 0;
    border-radius: 0 4px 0 0;
    background: #dbe9fc;
}
.tab.on {
    display: flex;
    align-items: center;
    gap: 9px;
    padding: 0 5px 0 0;
    border-left: 0;
    border-radius: 0 4px 0 0;
    background: linear-gradient(#ffe9cb, #ffb95c);
    font-weight: bold;
}
.slant {
    height: 22px;
}
.slant.overlap {
    margin-left: -13px;
}
.tab-more {
    margin: 0 -3px 0 auto;
    padding: 1px;
    border: 1px solid #6f94c8;
}
.toolbar {
    display: flex;
    align-items: center;
    flex: none;
    height: 28px;
    padding: 0 0 0 4px;
    border-left: 1px solid #ffb04c;
    border-bottom: 1px solid #6f9dd9;
    background: linear-gradient(#e3efff, #b5d3fb);
    white-space: nowrap;
}
.tool {
    display: flex;
    align-items: center;
    justify-content: center;
    width: 22px;
    height: 22px;
}
.tool.wide {
    width: 30px;
    gap: 3px;
}
.toggles {
    display: flex;
}
.toggled {
    background: #ffb04c;
    border: 1px solid #f7a032;
}
.bar {
    width: 2px;
    height: 18px;
    margin: 0 2px;
    background: #9abef0;
    border-right: 1px solid #f4f9ff;
}
.bar-end {
    margin-left: 26px;
}
.filter-label {
    margin: 0 3px 0 5px;
}
.combo {
    display: flex;
    height: 24px;
    border: 1px solid #a5c3ec;
    background: #fff;
}
.combo-filter {
    flex: 1;
    min-width: 60px;
}
.combo-scope {
    width: 179px;
    margin-right: 5px;
}
.combo input, .combo select {
    flex: 1;
    min-width: 0;
    padding: 0 2px;
    appearance: none;
    background: #fff;
}
.combo button, .arrow {
    display: flex;
    align-items: center;
    justify-content: center;
    width: 13px;
    background: linear-gradient(#e3efff, #bcd6f8);
}
.toolbar input[type=checkbox] {
    appearance: none;
    width: 13px;
    height: 13px;
    border: 1px solid #5c8cc8;
    background: #fff;
}
.whole {
    margin: 0 3px 0 5px;
}
.status {
    display: flex;
    height: 25px;
    border: 1px solid #315c9c;
    line-height: 23px;
}
.status strong {
    padding: 0 8px;
}
.status output {
    padding: 0 8px;
    border-left: 1px solid #315c9c;
    background: #fff;
}

/* packet list */
.sheet {
    display: grid;
    grid-template-columns: minmax(0, 1fr) 15px;
    grid-template-rows: minmax(0, 1fr) 16px;
    flex: 1;
    min-height: 0;
    margin-bottom: 1px;
    border-left: 1px solid #ffb04c;
    border-bottom: 1px solid #666;
    background: #f0f0f0;
}
.rows {
    overflow: hidden;
    background: #fff;
    border-bottom: 1px solid #f0f0f0;
}
table {
    width: 100%;
    table-layout: fixed;
    border-collapse: separate;
    border-spacing: 0;
}
.c-no {
    width: 70px;
}
.c-time, .c-proto {
    width: 120px;
}
.c-addr {
    width: 200px;
}
.c-size {
    width: 80px;
}
.c-field {
    width: 150px;
}
th, td {
    height: 21px;
    padding: 2px 6px 0;
    border-right: 1px solid #b9c3d3;
    border-bottom: 1px solid #b9c3d3;
    font-weight: normal;
    text-align: left;
    white-space: nowrap;
    overflow: hidden;
}
th {
    height: 24px;
    padding-top: 0;
    background: #d7e4f1;
}
th:last-child, td:last-child {
    border-right: 0;
}
.r, td:nth-child(1), td:nth-child(2), td:nth-child(6) {
    text-align: right;
}
td:nth-child(5), td:last-child {
    color: #d49b00;
}
.https td:nth-child(5), .https td:last-child {
    color: #ff3300;
}
.selected td {
    background: #8fb3e4;
    border-color: #5f9bd5;
}
.vscroll {
    display: flex;
    flex-direction: column;
    align-items: center;
    gap: 6px;
    padding: 6px 0 5px;
}
.vscroll .thumb {
    width: 100%;
    height: 17px;
    background: #cdcdcd;
}
.hscroll {
    grid-column: 1 / 3;
    display: flex;
    align-items: center;
    gap: 7px;
    padding: 0 20px 0 5px;
}
.hscroll .thumb {
    width: 90%;
    height: 15px;
    background: #cdcdcd;
}
.end {
    margin-top: auto;
}
.hscroll .end {
    margin: 0 0 0 auto;
}
.watermark {
    position: absolute;
    right: 8px;
    bottom: 9px;
    font: 16px "Liberation Sans", sans-serif;
    color: rgba(255, 255, 255, 0.75);
    text-shadow: 1px 1px 1px rgba(110, 110, 110, 0.4);
}
```
